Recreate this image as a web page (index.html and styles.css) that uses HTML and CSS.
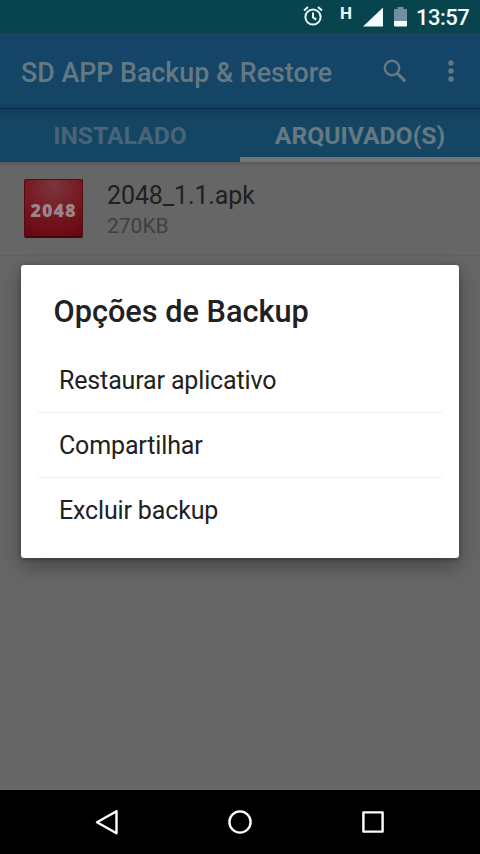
FILE: index.html
```
<!DOCTYPE html>
<html lang="pt-BR">
<head>
<meta charset="utf-8">
<title>SD APP Backup &amp; Restore</title>
<link rel="stylesheet" href="styles.css">
</head>
<body>
<div class="phone">
  <header class="status">
    <svg class="alarm" viewBox="0 0 20 22" fill="none" stroke="#e4f7f9" stroke-width="2"><circle cx="10" cy="12" r="7.6"/><path d="M10 7.4v5l3.3 2.2M1 5.5l4-3.4M19 5.5l-4-3.4"/></svg>
    <span class="net">H</span>
    <svg class="signal" viewBox="0 0 21 21"><path d="M21 0v20H0z" fill="#f0fdff"/></svg>
    <svg class="battery" viewBox="0 0 13 20"><path d="M3.5 0h6v2H13v12H0V2h3.5z" fill="#738f9d"/><path d="M0 14h13v4.5q0 1-1 1H1q-1 0-1-1z" fill="#f3fdff"/></svg>
    <span class="clock">13:57</span>
  </header>
  <div class="appbar">
    <h1>SD APP Backup &amp; Restore</h1>
    <svg class="search" viewBox="0 0 24 24" fill="none" stroke="#657983"><circle cx="9" cy="9" r="7.2" stroke-width="2.4"/><path d="M14.3 14.3l8 8" stroke-width="3.2"/></svg>
    <svg class="more" viewBox="0 0 6 22" fill="#657983"><circle cx="3" cy="3" r="2.7"/><circle cx="3" cy="11" r="2.7"/><circle cx="3" cy="19" r="2.7"/></svg>
  </div>
  <nav class="tabs">
    <div class="tab"><span>INSTALADO</span></div>
    <div class="tab active"><span>ARQUIVADO(S)</span></div>
  </nav>
  <main class="content">
    <div class="item">
      <div class="icon"><span>2048</span></div>
      <div class="info"><div class="name">2048_1.1.apk</div><div class="size">270KB</div></div>
    </div>
    <section class="dialog">
      <h2>Opções de Backup</h2>
      <ul>
        <li>Restaurar aplicativo</li>
        <li>Compartilhar</li>
        <li>Excluir backup</li>
      </ul>
    </section>
  </main>
  <footer class="navbar">
    <svg viewBox="0 0 26 26" fill="none" stroke="#fff" stroke-width="2.4" stroke-linejoin="round"><path d="M22.5 2.2v22L3 13.2z"/></svg>
    <svg viewBox="0 0 26 26" fill="none" stroke="#fff" stroke-width="2.4"><circle cx="13" cy="13" r="10.6"/></svg>
    <svg viewBox="0 0 26 26" fill="none" stroke="#fff" stroke-width="2.4" stroke-linejoin="round"><path d="M3.4 3.4h19.2v19.2H3.4z"/></svg>
  </footer>
</div>
</body>
</html>
```
FILE: styles.css
```
* { box-sizing: border-box; }
body { margin: 0; font-family: Roboto, "Liberation Sans", sans-serif; }
svg { display: block; flex: none; }
h1, h2, ul { margin: 0; padding: 0; }
span { white-space: nowrap; }
.phone { width: 480px; height: 854px; display: flex; flex-direction: column; background: #666; overflow: hidden; }
.status { height: 33px; background: #08444d; display: flex; align-items: flex-start; padding-left: 303px; }
.alarm { width: 20px; height: 22px; margin: 5px 17px 0 0; }
.net { width: 13px; font-size: 17px; line-height: 20px; font-weight: 700; color: #e8fafc; margin: 3px 10px 0 0; }
.signal { width: 20px; height: 21px; margin: 7px 11px 0 0; }
.battery { width: 13px; height: 20px; margin: 7px 9px 0 0; }
.clock { font-size: 22px; line-height: 35px; font-weight: 500; letter-spacing: -.5px; color: #f0fdff; }
.appbar { height: 76px; display: flex; align-items: center; padding: 0 26px 0 21px; background: linear-gradient(#1b4166 0, #15456a 8px, #144564 70px, #103a60 76px); border-bottom: 1px solid #0b2f57; }
h1 { flex: 1; font-size: 26.8px; line-height: 34px; font-weight: 500; color: #657983; white-space: nowrap; padding-top: 4px; }
.search { width: 24px; height: 24px; margin-right: 41px; }
.more { width: 6px; height: 22px; }
.tabs { height: 53px; display: flex; background: linear-gradient(#133d55, #144664 12px); }
.tab { width: 240px; height: 52px; display: flex; justify-content: center; font-size: 24.7px; line-height: 54px; font-weight: 700; color: #476479; }
.tab.active { color: #657983; border-bottom: 5px solid #727577; height: 53px; }
.content { flex: 1; display: flex; flex-direction: column; background: linear-gradient(#5a5b5c, #666 5px); }
.item { height: 94px; border-bottom: 1px solid #606060; display: flex; padding: 17px 24px; gap: 24px; }
.icon { width: 59px; height: 59px; border-radius: 2px; background: radial-gradient(circle at 50% 10%, #7b363d, #771b24 45%, #68050d); border: 1px solid #570a10; border-bottom: 2px solid #460509; display: flex; align-items: center; justify-content: center; color: #98868a; font: 800 18px/24px "Open Sans", sans-serif; padding-top: 4px; letter-spacing: 1px; }
.name { font-size: 25px; line-height: 32px; letter-spacing: -.1px; color: #202020; padding-top: 1px; }
.size { font-size: 21px; line-height: 30px; color: #404040; margin-top: -1px; }
.dialog { width: 438px; height: 293px; margin: 9px 0 0 21px; background: #fff; border-radius: 3px; box-shadow: 0 8px 20px rgba(0,0,0,.32), 0 1px 4px rgba(0,0,0,.3); }
h2 { font-size: 30.7px; line-height: 40px; font-weight: 500; color: #212121; padding: 27px 0 0 32.5px; height: 83px; }
ul { list-style: none; margin: 0 17px; }
li { height: 65px; padding-left: 21px; font-size: 25px; letter-spacing: -.15px; line-height: 65px; color: #212121; border-bottom: 1px solid #eee; }
li:last-child { border: 0; }
.navbar { height: 64px; background: #000; display: flex; justify-content: center; gap: 107px; padding-top: 19px; }
.navbar svg { width: 26px; height: 26px; }
```
